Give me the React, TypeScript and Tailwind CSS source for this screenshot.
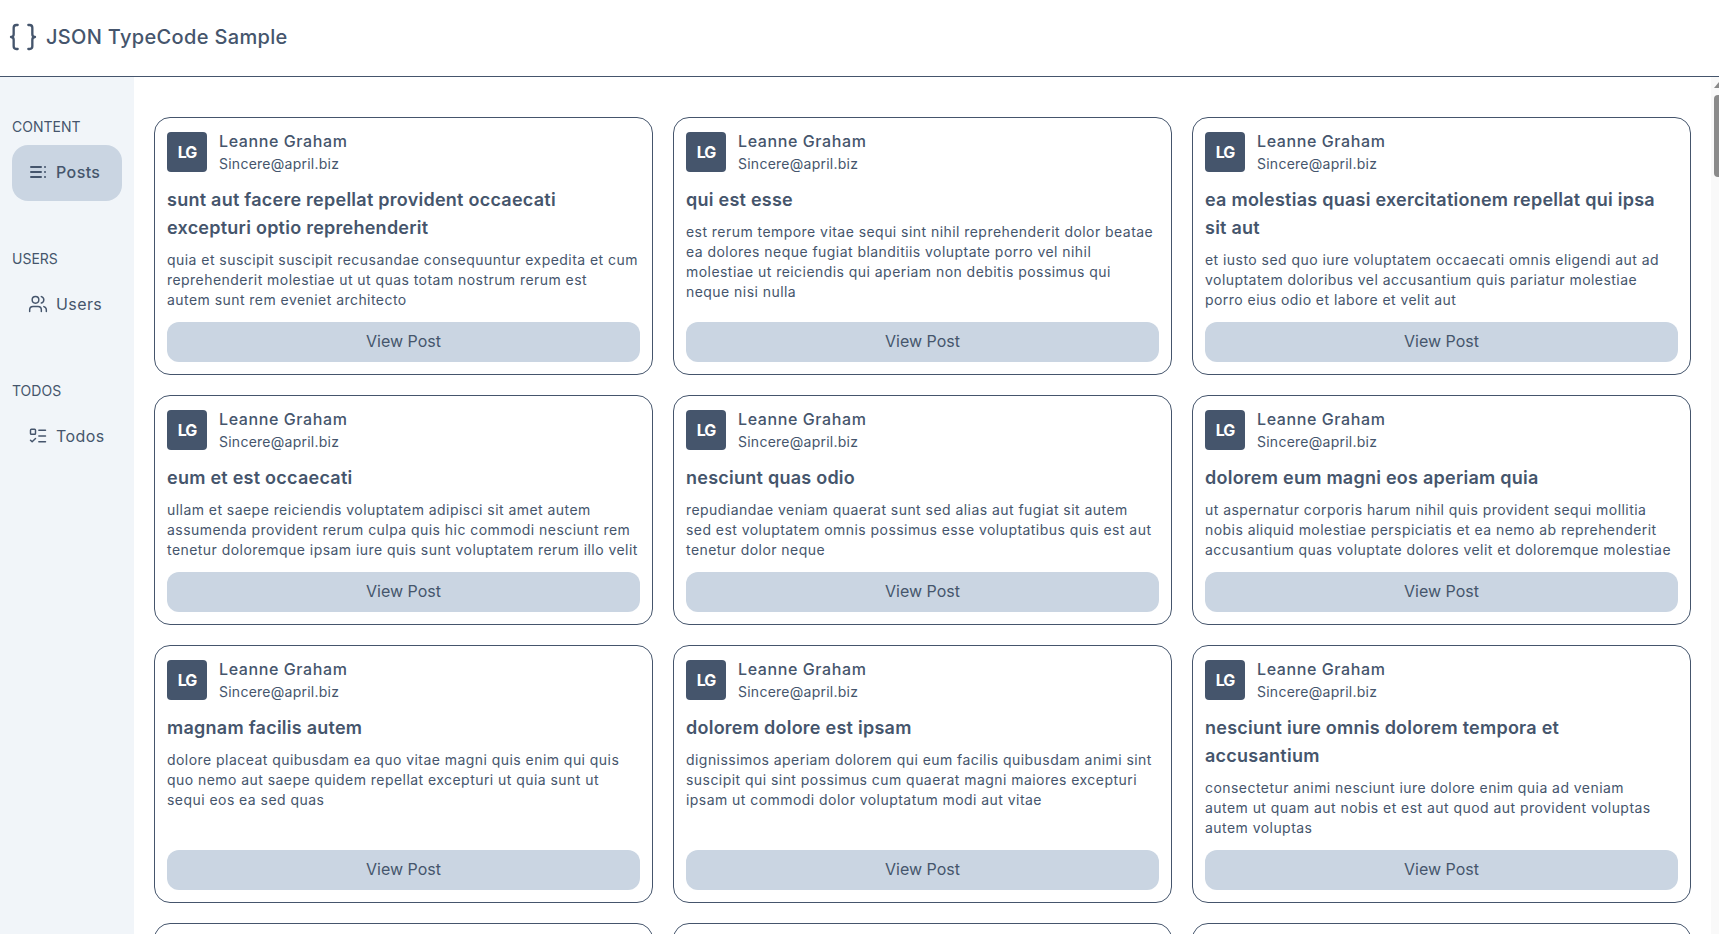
import React from "react";
import { Braces, Users, ListTodo } from "lucide-react";

interface Post {
  title: string;
  body: string;
}

// \n marks the line breaks of the design, the body is whitespace-pre-line
const posts: Post[] = [
  {
    title: "sunt aut facere repellat provident occaecati excepturi optio reprehenderit",
    body: "quia et suscipit suscipit recusandae consequuntur expedita et cum reprehenderit molestiae ut ut quas totam nostrum rerum est\nautem sunt rem eveniet architecto",
  },
  {
    title: "qui est esse",
    body: "est rerum tempore vitae sequi sint nihil reprehenderit dolor beatae ea dolores neque fugiat blanditiis voluptate porro vel nihil molestiae ut reiciendis qui aperiam non debitis possimus qui\nneque nisi nulla",
  },
  {
    title: "ea molestias quasi exercitationem repellat qui ipsa sit aut",
    body: "et iusto sed quo iure voluptatem occaecati omnis eligendi aut ad voluptatem doloribus vel accusantium quis pariatur molestiae porro eius odio et labore et velit aut",
  },
  {
    title: "eum et est occaecati",
    body: "ullam et saepe reiciendis voluptatem adipisci sit amet autem assumenda provident rerum culpa quis hic commodi nesciunt rem tenetur doloremque ipsam iure quis sunt voluptatem rerum illo velit",
  },
  {
    title: "nesciunt quas odio",
    body: "repudiandae veniam quaerat sunt sed alias aut fugiat sit autem\nsed est voluptatem omnis possimus esse voluptatibus quis est aut tenetur dolor neque",
  },
  {
    title: "dolorem eum magni eos aperiam quia",
    body: "ut aspernatur corporis harum nihil quis provident sequi mollitia nobis aliquid molestiae perspiciatis et ea nemo ab reprehenderit accusantium quas voluptate dolores velit et doloremque molestiae",
  },
  {
    title: "magnam facilis autem",
    body: "dolore placeat quibusdam ea quo vitae magni quis enim qui quis quo nemo aut saepe quidem repellat excepturi ut quia sunt ut sequi eos ea sed quas",
  },
  {
    title: "dolorem dolore est ipsam",
    body: "dignissimos aperiam dolorem qui eum facilis quibusdam animi sint suscipit qui sint possimus cum quaerat magni maiores excepturi ipsam ut commodi dolor voluptatum modi aut vitae",
  },
  {
    title: "nesciunt iure omnis dolorem tempora et accusantium",
    body: "consectetur animi nesciunt iure dolore enim quia ad veniam\nautem ut quam aut nobis et est aut quod aut provident voluptas\nautem voluptas",
  },
  {
    title: "optio molestias id quia eum",
    body: "quo et expedita modi cum officia vel magni doloribus qui repudiandae vero nisi sit quos veniam quod sed accusamus veritatis error",
  },
  {
    title: "et ea vero quia laudantium autem",
    body: "delectus reiciendis molestiae occaecati non minima eveniet qui voluptatibus accusamus in eum beatae sit vel qui neque voluptates ut commodi qui incidunt",
  },
  {
    title: "in quibusdam tempore odit est dolorem",
    body: "itaque id aut magnam praesentium quia et ea odit et ea voluptas et sapiente quia nihil amet occaecati quia id voluptatem incidunt ea est distinctio odio",
  },
];

const PostsIcon = () => (
  <svg width="20" height="20" viewBox="0 0 20 20" fill="none" stroke="currentColor" strokeWidth="2" strokeLinecap="round">
    <path d="M3 5h10M3 10h10M3 15h10M17 5h.01M17 10h.01M17 15h.01" />
  </svg>
);

const PostCard = ({ post }: { post: Post }) => (
  <div className="flex flex-col rounded-2xl border border-slate-600 bg-white p-3">
    <div className="flex items-center gap-3">
      <div className="flex h-10 w-10 shrink-0 items-center justify-center rounded bg-slate-600 text-base font-bold tracking-[-1px] text-white">
        LG
      </div>
      <div>
        <div className="mb-0.5 text-base font-medium leading-[22px] tracking-[0.6px] text-slate-600">Leanne Graham</div>
        <div className="text-sm leading-5 tracking-[0.25px] text-slate-600">Sincere@april.biz</div>
      </div>
    </div>
    <h2 className="mt-3 text-lg font-semibold leading-7 tracking-[0.25px] text-slate-600">{post.title}</h2>
    <p className="mb-3 mt-2 whitespace-pre-line text-sm leading-5 tracking-[0.45px] text-slate-600">{post.body}</p>
    <button className="mt-auto h-10 w-full rounded-xl bg-slate-300 pb-0.5 text-base text-slate-600">
      View Post
    </button>
  </div>
);

const SideItem = ({ label, active, icon }: { label: string; active?: boolean; icon: React.ReactNode }) => (
  <div
    className={`flex h-14 items-center gap-2 rounded-2xl pb-0.5 pl-4 text-base tracking-wide text-slate-600 ${
      active ? "bg-slate-300 font-medium" : ""
    }`}
  >
    {icon}
    {label}
  </div>
);

const SideSection = ({ title, children }: { title: string; children: React.ReactNode }) => (
  <div className="mb-12">
    <div className="mb-2 text-sm uppercase leading-5 text-slate-600">{title}</div>
    {children}
  </div>
);

export default function App() {
  return (
    <div className="flex h-screen flex-col overflow-hidden bg-white font-['Inter',sans-serif]">
      <header className="flex h-[77px] shrink-0 items-center gap-[7px] border-b border-slate-600 pb-0.5 pl-[7px] text-slate-600">
        <Braces size={32} strokeWidth={1.75} />
        <h1 className="text-xl font-medium tracking-[0.33px]">JSON TypeCode Sample</h1>
      </header>
      <div className="flex min-h-0 flex-1">
        <aside className="w-[134px] shrink-0 bg-slate-100 px-3 pt-10">
          <SideSection title="Content">
            <SideItem label="Posts" active icon={<PostsIcon />} />
          </SideSection>
          <SideSection title="Users">
            <SideItem label="Users" icon={<Users size={20} strokeWidth={1.75} />} />
          </SideSection>
          <SideSection title="Todos">
            <SideItem label="Todos" icon={<ListTodo size={20} strokeWidth={1.75} />} />
          </SideSection>
        </aside>
        <main className="min-w-0 flex-1 overflow-hidden p-5 pt-10">
          <div className="grid grid-cols-3 gap-5">
            {posts.map((post) => (
              <PostCard key={post.title} post={post} />
            ))}
          </div>
        </main>
        <div className="w-2 shrink-0 bg-[#f9f9f9]">
          <svg className="ml-[3px] mt-[5px] block" width="5" height="6" viewBox="0 0 5 6">
            <path d="M5 0V6H0Z" fill="#8a8a8a" />
          </svg>
          <div className="ml-[3px] mt-[7px] h-[82px] rounded-l bg-[#8a8a8a]" />
        </div>
      </div>
    </div>
  );
}
